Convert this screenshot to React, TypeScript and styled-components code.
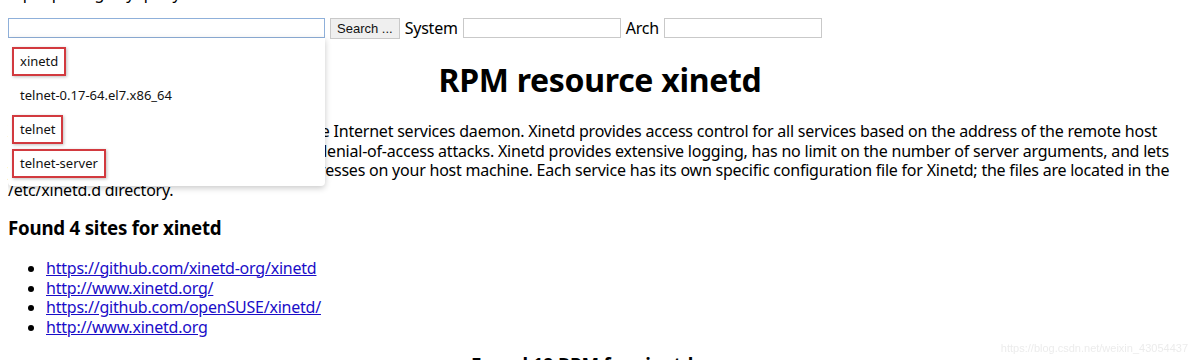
import React from "react";
import styled, { createGlobalStyle } from "styled-components";

const GlobalStyle = createGlobalStyle`
  html, body { background: #fff; }
  body {
    margin: 0 8px;
    font-family: "Noto Sans", "Open Sans", sans-serif;
    color: #000;
    letter-spacing: -0.22px;
    overflow: hidden;
  }
`;

const Page = styled.div`
  margin-top: -20px;
  position: relative;
`;

const Intro = styled.p`
  margin: 0;
  font-size: 16px;
  line-height: 26px;
`;

const SearchForm = styled.form`
  margin-top: 11px;
  display: flex;
  align-items: center;
  gap: 5px;
  font-size: 16px;
`;

const Field = styled.div`
  position: relative;
`;

const TextInput = styled.input<{ $w: number; $focus?: boolean }>`
  box-sizing: border-box;
  width: ${(p) => p.$w}px;
  height: 20px;
  margin: 0;
  border: 1px solid ${(p) => (p.$focus ? "#8fb0da" : "#c9c9c9")};
  background: #fff;
  outline: none;
  display: block;
`;

const Button = styled.button`
  box-sizing: border-box;
  height: 21px;
  padding: 0 6px;
  margin: 0;
  font-family: "Liberation Sans", Arial, sans-serif;
  font-size: 13px;
  color: #111;
  background: #efefef;
  border: 1px solid #c9c9c9;
`;

const Label = styled.span`
  font-size: 16px;
`;

const Popup = styled.ul`
  position: absolute;
  top: 20px;
  left: 0;
  width: 317px;
  box-sizing: border-box;
  margin: 0;
  padding: 6px 0 6px;
  list-style: none;
  letter-spacing: 0;
  background: #fff;
  border-radius: 0 0 4px 4px;
  box-shadow: 0 2px 6px rgba(0, 0, 0, 0.22);
  z-index: 5;
`;

const Option = styled.li`
  height: 34px;
  display: flex;
  align-items: center;
  padding-left: 4px;
`;

const OptionText = styled.span<{ $marked?: boolean }>`
  font-size: 13px;
  color: #111;
  padding: 3px 6px 4px 6px;
  border: 2px solid ${(p) => (p.$marked ? "#d23a3f" : "transparent")};
  box-shadow: ${(p) => (p.$marked ? "1px 1px 3px rgba(0,0,0,0.25)" : "none")};
`;

const Title = styled.h1`
  margin: 21px 0 0;
  text-align: center;
  font-size: 32px;
  line-height: 40px;
  font-weight: 700;
  letter-spacing: -0.3px;
`;

const Description = styled.p`
  margin: 22px 0 0;
  font-size: 16px;
  line-height: 19.7px;
`;

const SubTitle = styled.h3<{ $center?: boolean }>`
  margin: 15px 0 0;
  font-size: 18.7px;
  line-height: 24px;
  font-weight: 700;
  text-align: ${(p) => (p.$center ? "center" : "left")};
`;

const Sites = styled.ul`
  margin: 19px 0 0;
  padding-left: 38px;
  font-size: 16px;
  line-height: 19.7px;
`;

const SiteLink = styled.a`
  color: #1a0dc8;
  text-decoration: underline;
`;

const BottomTitle = styled(SubTitle)`
  margin-top: 15px;
  padding-right: 36px;
`;

const Watermark = styled.div`
  position: fixed;
  right: 12px;
  bottom: 6px;
  font-family: "Liberation Sans", Arial, sans-serif;
  font-size: 11px;
  letter-spacing: 0;
  color: #ececec;
`;

const options = [
  { text: "xinetd", marked: true },
  { text: "telnet-0.17-64.el7.x86_64", marked: false },
  { text: "telnet", marked: true },
  { text: "telnet-server", marked: true },
];

const sites = [
  "https://github.com/xinetd-org/xinetd",
  "http://www.xinetd.org/",
  "https://github.com/openSUSE/xinetd/",
  "http://www.xinetd.org",
];

export default function App() {
  return (
    <>
      <GlobalStyle />
      <Page>
        <Intro>Input package by query</Intro>
        <SearchForm onSubmit={(e) => e.preventDefault()}>
          <Field>
            <TextInput $w={317} $focus />
            <Popup>
              {options.map((o) => (
                <Option key={o.text}>
                  <OptionText $marked={o.marked}>{o.text}</OptionText>
                </Option>
              ))}
            </Popup>
          </Field>
          <Button type="submit">Search ...</Button>
          <Label>System</Label>
          <TextInput $w={158} />
          <Label>Arch</Label>
          <TextInput $w={158} />
        </SearchForm>
        <Title>RPM resource xinetd</Title>
        <Description>
          Xinetd is a secure replacement for inetd, the Internet services daemon. Xinetd provides
          access control for all services based on the address of the remote host and/or on time of
          access, and can prevent denial-of-access attacks. Xinetd provides extensive logging, has no
          limit on the number of server arguments, and lets you bind specific services to specific IP
          addresses on your host machine. Each service has its own specific configuration file for
          Xinetd; the files are located in the /etc/xinetd.d directory.
        </Description>
        <SubTitle>Found 4 sites for xinetd</SubTitle>
        <Sites>
          {sites.map((s) => (
            <li key={s}>
              <SiteLink href={s}>{s}</SiteLink>
            </li>
          ))}
        </Sites>
        <BottomTitle $center>Found 19 RPM for xinetd</BottomTitle>
      </Page>
      <Watermark>https://blog.csdn.net/weixin_43054437</Watermark>
    </>
  );
}
